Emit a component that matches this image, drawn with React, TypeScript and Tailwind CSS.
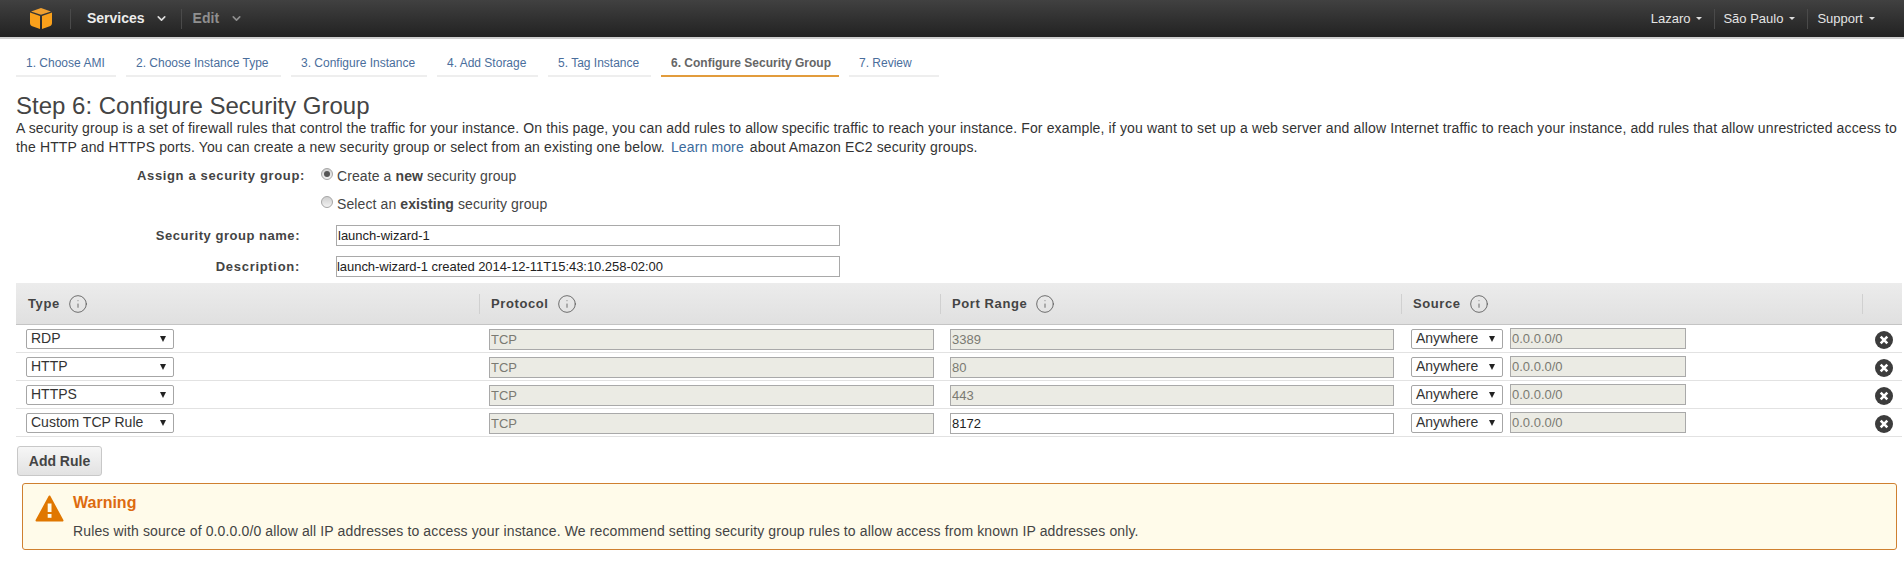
import { ChevronDown, Info } from 'lucide-react';

const TABS = [
  { label: '1. Choose AMI', width: 'w-[100px]' },
  { label: '2. Choose Instance Type', width: 'w-[155px]' },
  { label: '3. Configure Instance', width: 'w-[136px]' },
  { label: '4. Add Storage', width: 'w-[101px]' },
  { label: '5. Tag Instance', width: 'w-[103px]' },
  { label: '6. Configure Security Group', width: 'w-[178px]', active: true },
  { label: '7. Review', width: 'w-[90px]' },
];

const RULES = [
  { type: 'RDP', port: '3389', editable: false },
  { type: 'HTTP', port: '80', editable: false },
  { type: 'HTTPS', port: '443', editable: false },
  { type: 'Custom TCP Rule', port: '8172', editable: true },
];

function Logo() {
  return (
    <svg width="22" height="21" viewBox="0 0 22 21" aria-hidden="true">
      <path d="M0 4.5 L10 8 V21 L3 18.5 Q0 17.5 0 15 Z" fill="#f9a01b" />
      <path d="M22 4.5 L12 8 V21 L19 18.5 Q22 17.5 22 15 Z" fill="#f9a01b" />
      <path d="M11 0 L21 3.4 L11 6.8 L1 3.4 Z" fill="#f0a030" />
    </svg>
  );
}

function NavMenu({ label, last }: { label: string; last?: boolean }) {
  return (
    <div className={`flex items-center h-[20px] ${last ? 'pl-[9px] pr-[13px]' : 'pl-[8px] pr-[12px] border-r border-[#4a4a4a]'}`}>
      <span className="text-[13px] text-[#e4e4e4]">{label}</span>
      <span className="ml-[6px] w-0 h-0 border-x-[3.5px] border-t-[3.5px] border-x-transparent border-t-[#dddddd]" />
    </div>
  );
}

function HeaderCell({ label, first }: { label: string; first?: boolean }) {
  return (
    <div className="flex items-center h-full">
      <div className={`flex items-center h-[20px] w-full ${first ? 'pl-[12px]' : 'pl-[11px] border-l border-[#d0d0d0]'}`}>
        <span className="text-[13px] font-bold text-[#444444] tracking-[0.6px]">{label}</span>
        <Info size={20} strokeWidth={1} className="text-[#555555] ml-[8px]" />
      </div>
    </div>
  );
}

function FakeSelect({ value, width }: { value: string; width: string }) {
  return (
    <div className={`flex items-center justify-between h-[20px] ${width} pl-[4px] pr-[7px] border border-[#a6a6a6] rounded-[2px] bg-white`}>
      <span className="text-[14px] text-[#333333]">{value}</span>
      <span className="w-0 h-0 border-x-[3px] border-t-[6px] border-x-transparent border-t-[#222222]" />
    </div>
  );
}

function TextBox({ value, disabled, width }: { value: string; disabled?: boolean; width: string }) {
  return (
    <input
      readOnly
      value={value}
      className={`h-[21px] ${width} px-[1px] border border-[#a9a9a9] text-[13px] outline-none ${
        disabled ? 'bg-[#ebebe4] text-[#7a7a72]' : 'bg-white text-[#222222]'
      }`}
    />
  );
}

function RemoveIcon() {
  return (
    <svg width="18" height="18" viewBox="0 0 18 18" aria-hidden="true">
      <circle cx="9" cy="9" r="9" fill="#3c3c3c" />
      <path d="M5.7 5.7 L12.3 12.3 M12.3 5.7 L5.7 12.3" stroke="#ffffff" strokeWidth="2.6" />
    </svg>
  );
}

function Radio({ checked }: { checked?: boolean }) {
  return (
    <span className="flex items-center justify-center w-[12px] h-[12px] rounded-full border border-[#a5a5a5] bg-gradient-to-b from-[#cfcfcf] to-[#f2f2f2]">
      {checked && <span className="w-[6px] h-[6px] rounded-full bg-[#555555]" />}
    </span>
  );
}

function FieldLabel({ children, width, tracking }: { children: string; width: string; tracking: string }) {
  return <label className={`${width} ${tracking} text-right text-[13px] font-bold text-[#444444]`}>{children}</label>;
}

export default function App() {
  return (
    <div className="w-[1904px] h-[581px] bg-white overflow-hidden font-['Liberation_Sans',Arial,sans-serif] text-[#444444]">
      <nav className="flex items-center justify-between h-[39px] bg-gradient-to-b from-[#414141] to-[#222222] border-b-2 border-[#cfcfcf]">
        <div className="flex items-center">
          <div className="flex justify-center items-center pl-[30px] pr-[18px] h-[20px] border-r border-[#4a4a4a]">
            <Logo />
          </div>
          <div className="flex items-center h-[20px] pl-[16px] pr-[13px] border-r border-[#4a4a4a]">
            <span className="text-[14px] font-bold text-[#ececec]">Services</span>
            <ChevronDown size={13} strokeWidth={3} className="ml-[10px] text-[#dddddd]" />
          </div>
          <div className="flex items-center pl-[11px]">
            <span className="text-[14px] font-bold text-[#8f8f8f]">Edit</span>
            <ChevronDown size={13} strokeWidth={3} className="ml-[11px] text-[#8f8f8f]" />
          </div>
        </div>
        <div className="flex items-center pr-[16px]">
          <NavMenu label="Lazaro" />
          <NavMenu label="São Paulo" />
          <NavMenu label="Support" last />
        </div>
      </nav>

      <div className="flex gap-[10px] pl-[16px] pt-[14px]">
        {TABS.map((tab) => (
          <div
            key={tab.label}
            className={`${tab.width} h-[24px] pl-[10px] border-b-2 text-[12px] leading-[20px] whitespace-nowrap ${
              tab.active ? 'border-[#e29c3c] font-bold text-[#666666]' : 'border-[#eeeeee] text-[#4a6e9c]'
            }`}
          >
            {tab.label}
          </div>
        ))}
      </div>

      <div className="pl-[16px] pt-[16px]">
        <h1 className="text-[24px] leading-[26px] text-[#444444]">Step 6: Configure Security Group</h1>
        <div className="text-[14px] leading-[19px] tracking-[0.135px] text-[#333333] whitespace-nowrap">
          <p>
            A security group is a set of firewall rules that control the traffic for your instance. On this page, you can add rules to allow specific traffic to reach your instance. For example, if you want to set up a web server and allow Internet traffic to reach your instance, add rules that allow unrestricted access to
          </p>
          <p className="flex gap-[6px]">
            <span>the HTTP and HTTPS ports. You can create a new security group or select from an existing one below.</span>
            <a className="text-[#3b6a9c]">Learn more</a>
            <span>about Amazon EC2 security groups.</span>
          </p>
        </div>
      </div>

      <div className="flex mt-[9px]">
        <FieldLabel width="w-[305px]" tracking="tracking-[0.65px]">
          Assign a security group:
        </FieldLabel>
        <div className="flex flex-col gap-[12px] pl-[16px]">
          <div className="flex gap-[4px] h-[16px] text-[14px] tracking-[0.1px]">
            <span className="pt-[2px]">
              <Radio checked />
            </span>
            <span className="leading-[20px]">
              Create a <b>new</b> security group
            </span>
          </div>
          <div className="flex gap-[4px] h-[16px] text-[14px] tracking-[0.1px]">
            <span className="pt-[2px]">
              <Radio />
            </span>
            <span className="leading-[20px]">
              Select an <b>existing</b> security group
            </span>
          </div>
        </div>
      </div>

      <div className="flex flex-col gap-[10px] mt-[15px]">
        <div className="flex items-center">
          <FieldLabel width="w-[300px]" tracking="tracking-[0.53px]">
            Security group name:
          </FieldLabel>
          <input readOnly value="launch-wizard-1" className="ml-[36px] w-[504px] h-[21px] px-[1px] border border-[#a9a9a9] text-[13px] text-[#222222] outline-none" />
        </div>
        <div className="flex items-center">
          <FieldLabel width="w-[300px]" tracking="tracking-[0.7px]">
            Description:
          </FieldLabel>
          <input
            readOnly
            value="launch-wizard-1 created 2014-12-11T15:43:10.258-02:00"
            className="ml-[36px] w-[504px] h-[21px] pl-0 pr-[1px] border border-[#a9a9a9] text-[13px] tracking-[-0.05px] text-[#222222] outline-none"
          />
        </div>
      </div>

      <div className="ml-[16px] mr-[2px] mt-[6px]">
        <div className="grid grid-cols-[463px_461px_461px_461px_1fr] items-center h-[42px] bg-gradient-to-b from-[#ececec] to-[#e0e0e0] border-b border-[#c4c4c4]">
          <HeaderCell label="Type" first />
          <HeaderCell label="Protocol" />
          <HeaderCell label="Port Range" />
          <HeaderCell label="Source" />
          <div className="h-[20px] border-l border-[#d0d0d0]" />
        </div>
        {RULES.map((rule) => (
          <div key={rule.type} className="grid grid-cols-[463px_461px_461px_461px_1fr] items-center h-[28px] border-b border-[#e2e2e2]">
            <div className="pl-[10px]">
              <FakeSelect value={rule.type} width="w-[148px]" />
            </div>
            <div className="pl-[10px]">
              <TextBox value="TCP" disabled width="w-[445px]" />
            </div>
            <div className="pl-[10px]">
              <TextBox value={rule.port} disabled={!rule.editable} width="w-[444px]" />
            </div>
            <div className="flex items-center gap-[7px] pl-[10px]">
              <FakeSelect value="Anywhere" width="w-[92px]" />
              <TextBox value="0.0.0.0/0" disabled width="w-[176px]" />
            </div>
            <div className="flex pl-[13px] pt-[3px]">
              <RemoveIcon />
            </div>
          </div>
        ))}
      </div>

      <button className="block ml-[17px] mt-[9px] w-[85px] h-[30px] rounded-[3px] border border-[#c8c8c8] bg-gradient-to-b from-[#f6f6f6] to-[#e2e2e2] text-[14px] font-bold text-[#444444]">
        Add Rule
      </button>

      <div className="flex ml-[22px] mt-[7px] w-[1875px] h-[67px] rounded-[3px] border border-[#cf8030] bg-[#fffbea] pl-[12px] pt-[11px]">
        <svg width="29" height="27" viewBox="0 0 29 27" aria-hidden="true">
          <path d="M14.5 1.5 L27.5 25.5 H1.5 Z" fill="#e07700" stroke="#e07700" strokeWidth="2" strokeLinejoin="round" />
          <rect x="12.7" y="8.5" width="3.8" height="8.5" fill="#fffbea" />
          <rect x="12.7" y="19" width="3.8" height="3.8" fill="#fffbea" />
        </svg>
        <div className="ml-[9px] -mt-[2px]">
          <div className="text-[16px] font-bold leading-[20px] text-[#dd6b10]">Warning</div>
          <div className="mt-[9px] text-[14px] leading-[18px] tracking-[0.13px] text-[#444444]">
            Rules with source of 0.0.0.0/0 allow all IP addresses to access your instance. We recommend setting security group rules to allow access from known IP addresses only.
          </div>
        </div>
      </div>
    </div>
  );
}
